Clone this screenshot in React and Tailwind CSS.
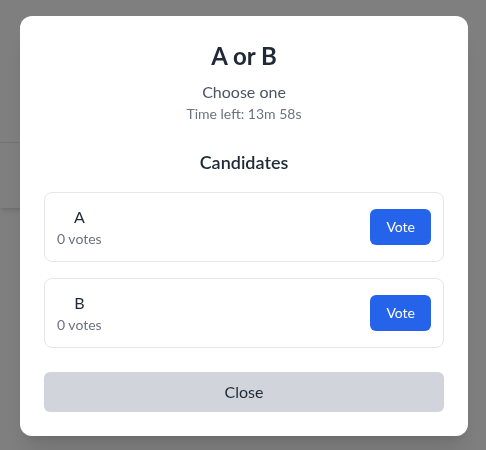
import React from 'react';

const candidates = [
  { id: 'a', name: 'A', votes: 0 },
  { id: 'b', name: 'B', votes: 0 },
];

const PollModal = () => {
  return (
    <div className="fixed inset-0 bg-black/50 flex items-center justify-center pt-[2px] pl-[2px]">
      <div className="w-full max-w-md bg-white rounded-xl shadow-xl p-6">
        <h2 className="text-2xl font-bold text-[#1f2937] text-center">A or B</h2>
        <p className="mt-2 text-base text-[#4b5563] text-center">Choose one</p>
        <p className="text-sm text-[#6b7280] text-center">Time left: 13m 58s</p>

        <h3 className="mt-6 mb-4 text-lg font-semibold text-[#1f2937] text-center">Candidates</h3>

        <div className="space-y-4">
          {candidates.map((c) => (
            <div
              key={c.id}
              className="flex items-center justify-between p-3 border border-[#e5e7eb] rounded-lg"
            >
              <div className="flex flex-col items-center">
                <span className="text-base text-[#1f2937]">{c.name}</span>
                <span className="text-sm text-[#6b7280]">{c.votes} votes</span>
              </div>
              <button className="px-4 py-2 text-sm text-white bg-[#2563eb] rounded-md hover:bg-[#1d4ed8]">
                Vote
              </button>
            </div>
          ))}
        </div>

        <button className="mt-6 w-full py-2 text-base text-[#1f2937] bg-[#d1d5db] rounded-md hover:bg-[#9ca3af]">
          Close
        </button>
      </div>
    </div>
  );
};

export default function App() {
  return (
    <div className="min-h-screen bg-white font-['Lato',sans-serif]">
      {/* page behind the dialog */}
      <div className="pt-[142px]">
        <div className="w-[300px] h-[66px] border-t border-[#e5e7eb] bg-white shadow-md"></div>
      </div>
      <PollModal />
    </div>
  );
}
